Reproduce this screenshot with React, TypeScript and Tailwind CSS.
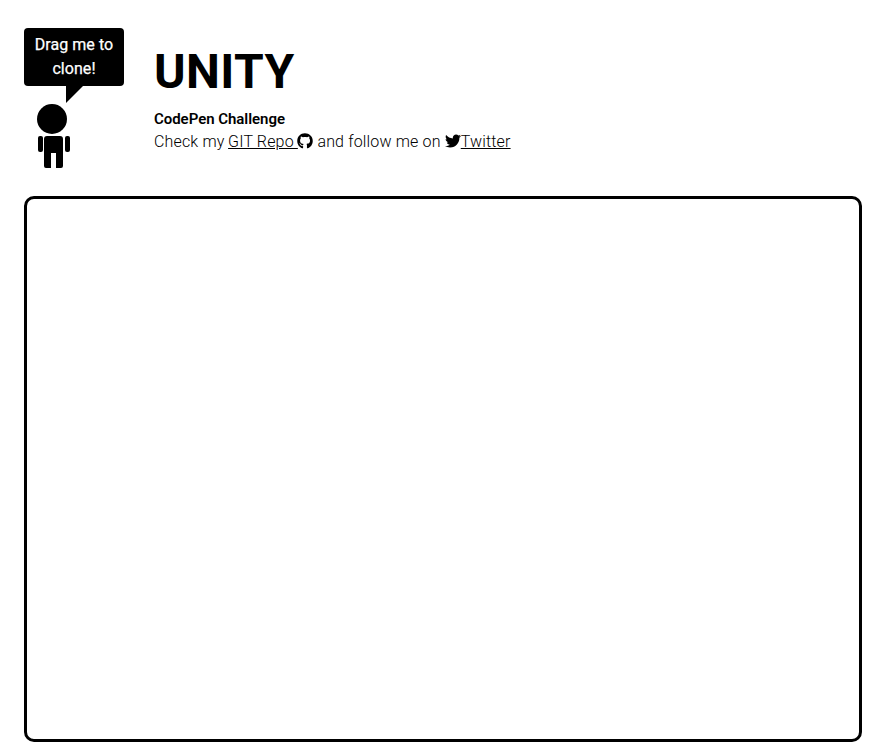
import React from "react";
import { FaGithub, FaTwitter } from "react-icons/fa";

function Person() {
  return (
    <svg width="34" height="65" viewBox="0 0 34 65" className="ml-[13px] mt-[17px] block">
      <circle cx="15" cy="16" r="15" />
      <path d="M10 33H23a3 3 0 0 1 3 3V63a2 2 0 0 1-2 2H19V50H14V65H9a2 2 0 0 1-2-2V36a3 3 0 0 1 3-3Z" />
      <rect x="1" y="33" width="5" height="16" rx="2" />
      <rect x="28" y="33" width="5" height="16" rx="2" />
    </svg>
  );
}

export default function App() {
  return (
    <div className="flex h-[754px] flex-col bg-white pl-6 pr-4 pt-7 font-[Roboto,sans-serif] text-black">
      <header className="flex h-[168px] shrink-0">
        <div className="w-[130px]">
          <div className="relative h-[58px] w-[100px] rounded bg-black pt-[5px] text-center text-base font-normal leading-6 tracking-[0.05px] text-white [-webkit-text-stroke:0.25px_white]">
            Drag me to
            <br />
            clone!
            <svg width="18" height="18" className="absolute left-[42px] top-[57px]" fill="black">
              <path d="M0 0H18L0 18Z" />
            </svg>
          </div>
          <Person />
        </div>
        <div className="pt-[15px]">
          <h1 className="text-[48px] font-bold leading-[58px] tracking-[0.4px]">UNITY</h1>
          <p className="mt-[7px] text-[15px] font-semibold leading-[23px] tracking-[-0.04px]">CodePen Challenge</p>
          <p className="-mt-px text-base font-light leading-[23px] tracking-[0.16px]">
            Check my <a className="-ml-[0.5px] underline">GIT Repo <FaGithub className="-ml-[0.5px] inline size-4 align-[-2px]" /></a> and follow me on <FaTwitter className="inline size-4 align-[-2px]" /><a className="underline">Twitter</a>
          </p>
        </div>
      </header>
      <main className="h-[546px] w-[838px] rounded-[10px] border-[3px] border-black" />
    </div>
  );
}
